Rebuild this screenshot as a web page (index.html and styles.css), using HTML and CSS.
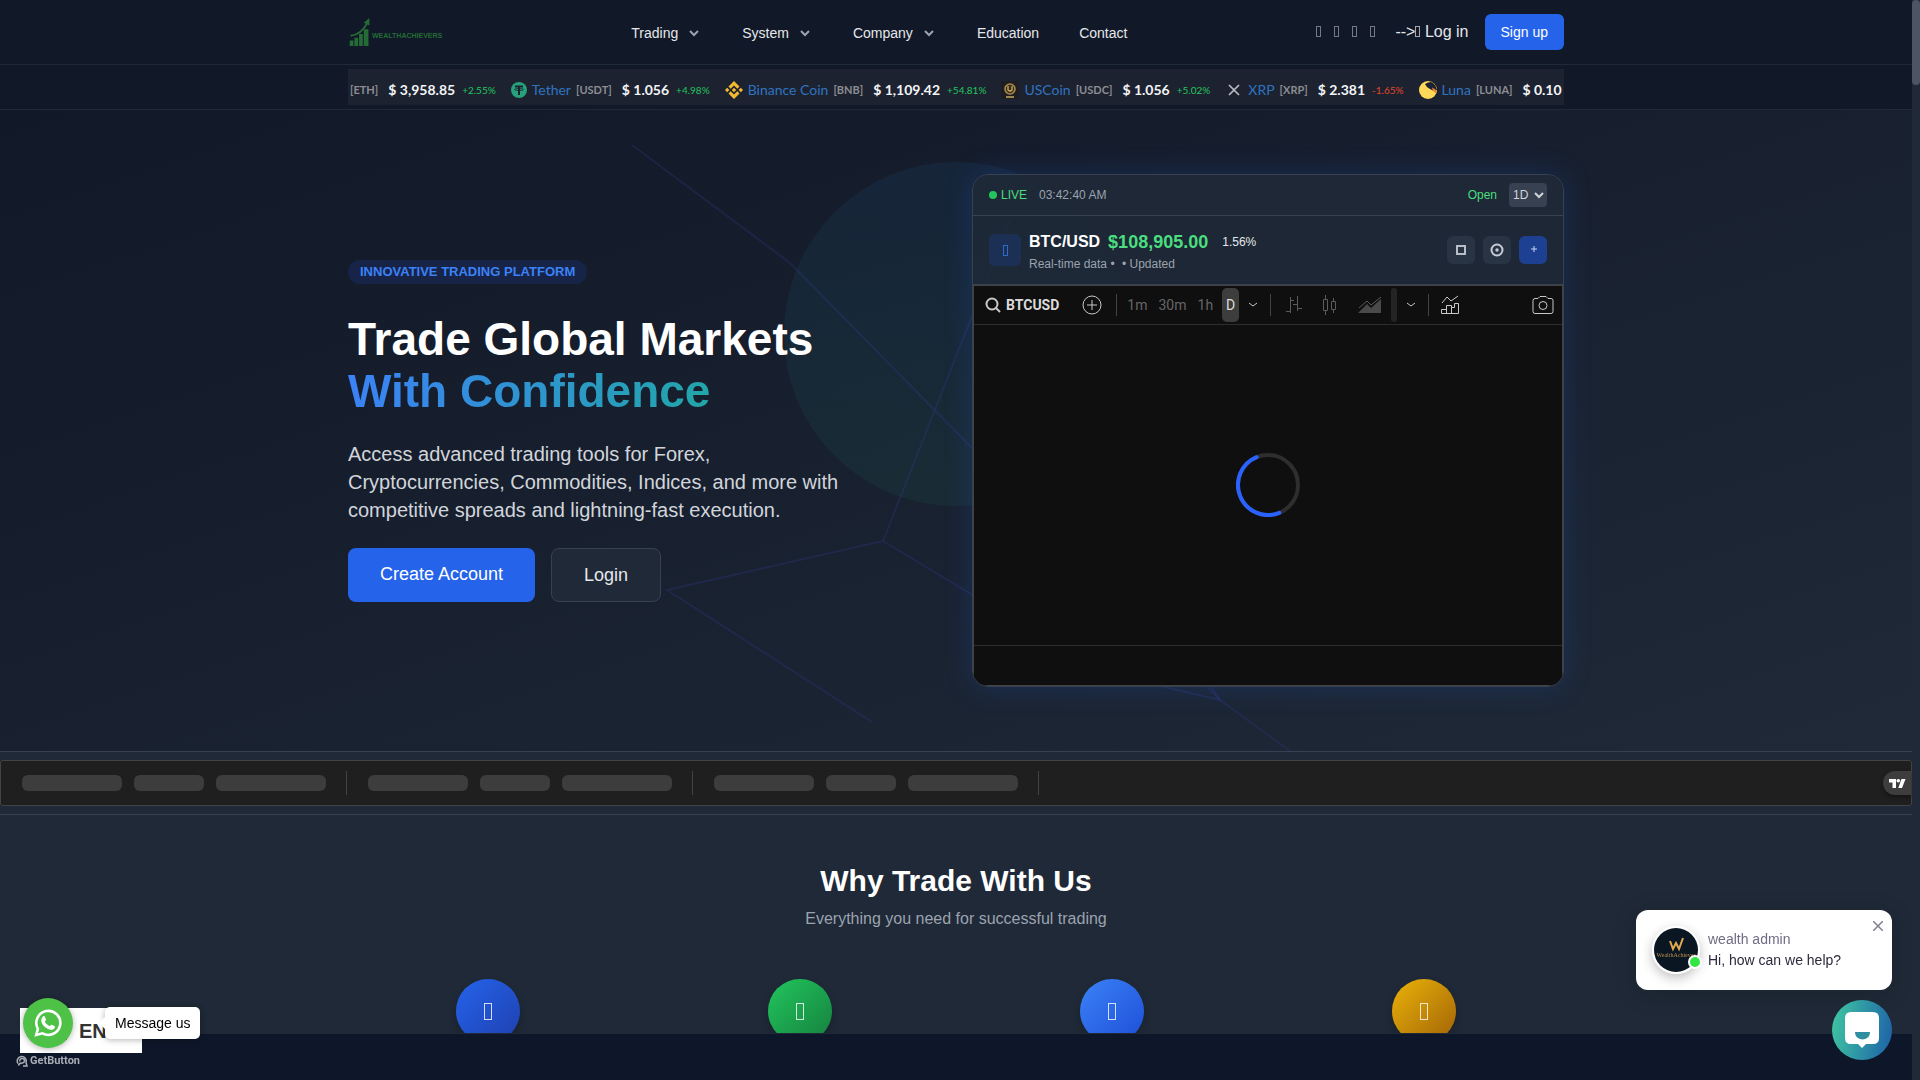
FILE: index.html
```html
<!DOCTYPE html>
<html lang="en">
<head>
  <meta charset="UTF-8">
  <meta name="viewport" content="width=device-width, initial-scale=1.0">
  <title>WealthAchievers</title>
  <link rel="stylesheet" href="styles.css">
</head>
<body>
  <header class="site-header">
    <div class="container header-row">
      <a class="logo" href="#">
        <svg width="22" height="30" viewBox="0 0 22 32" aria-hidden="true">
          <path d="M0 25h4v6H0zM5 22h4v9H5zM10 18h4v13h-4zM15 13h5v18h-5z" fill="currentColor"/>
          <path d="M1 20C9 19 15 14 19 6" fill="none" stroke="currentColor" stroke-width="2"/>
          <path d="M21 1l-6 5 6 3z" fill="currentColor"/>
        </svg>
        <span>WEALTHACHIEVERS</span>
      </a>
      <nav class="main-nav">
        <button type="button">Trading <svg class="chev" viewBox="0 0 16 16"><path d="M4 6l4 4 4-4"/></svg></button>
        <button type="button">System <svg class="chev" viewBox="0 0 16 16"><path d="M4 6l4 4 4-4"/></svg></button>
        <button type="button">Company <svg class="chev" viewBox="0 0 16 16"><path d="M4 6l4 4 4-4"/></svg></button>
        <a href="#">Education</a>
        <a href="#">Contact</a>
      </nav>
      <div class="header-actions">
        <div class="social">
          <a href="#" aria-label="Facebook"><i class="glyph"></i></a>
          <a href="#" aria-label="Twitter"><i class="glyph"></i></a>
          <a href="#" aria-label="Instagram"><i class="glyph"></i></a>
          <a href="#" aria-label="Telegram"><i class="glyph"></i></a>
        </div>
        <div class="login-wrap">--&gt;<a href="#"><i class="glyph"></i> Log in</a></div>
        <a class="signup" href="#">Sign up</a>
      </div>
    </div>
  </header>

  <div class="ticker">
    <div class="container">
      <div class="ticker-track">
        <div class="coin"><small>[ETH]</small><b>$ 3,958.85</b><em>+2.55%</em></div>
        <div class="coin">
          <svg width="16" height="16" viewBox="0 0 16 16"><circle cx="8" cy="8" r="8" fill="#26a17b"/><path d="M4 4.500h8M8 4v9" stroke="#1d2230" stroke-width="2"/><ellipse cx="8" cy="7.500" rx="4.500" ry="1" fill="none" stroke="#1d2230" stroke-width=".8"/></svg>
          <a href="#">Tether</a><small>[USDT]</small><b>$ 1.056</b><em>+4.98%</em>
        </div>
        <div class="coin">
          <svg width="18" height="18" viewBox="0 0 18 18" fill="#f3ba2f"><path d="M9 0l5.500 5.500-2.200 2.200L9 4.400 5.700 7.700 3.500 5.500zM9 18l5.500-5.500-2.200-2.200L9 13.600l-3.300-3.300-2.200 2.200zM2.200 6.800L4.400 9l-2.200 2.200L0 9zM15.800 6.800L18 9l-2.200 2.200L13.600 9zM9 6.800L11.200 9 9 11.200 6.800 9z"/></svg>
          <a href="#">Binance Coin</a><small>[BNB]</small><b>$ 1,109.42</b><em>+54.81%</em>
        </div>
        <div class="coin">
          <svg width="18" height="18" viewBox="0 0 18 18"><rect width="18" height="18" fill="#1d1d22"/><circle cx="9" cy="8" r="5" fill="#3a2e1c" stroke="#a98a4e" stroke-width="1.6"/><path d="M7 5v4q2 2 4 0V5M5 16h8" fill="none" stroke="#c9a964" stroke-width="1.3"/></svg>
          <a href="#">USCoin</a><small>[USDC]</small><b>$ 1.056</b><em>+5.02%</em>
        </div>
        <div class="coin">
          <svg width="18" height="18" viewBox="0 0 18 18"><path d="M4 4l4 4q1 1 2 0l4-4M4 14l4-4q1-1 2 0l4 4" fill="none" stroke="#b9bcc2" stroke-width="1.7"/></svg>
          <a href="#">XRP</a><small>[XRP]</small><b>$ 2.381</b><em class="down">-1.65%</em>
        </div>
        <div class="coin">
          <svg width="18" height="18" viewBox="0 0 18 18"><circle cx="9" cy="9" r="9" fill="#ffd85a"/><path d="M6 3Q9 1 12 1q5 2 6 8-3 2-7-1Q7 6 6 3z" fill="#1d2230"/><path d="M13 6.500q3 1 5 3.500l-1 2q-3-1-4-5.500z" fill="#f0862c"/></svg>
          <a href="#">Luna</a><small>[LUNA]</small><b>$ 0.10</b>
        </div>
      </div>
    </div>
  </div>

  <main>
    <section class="hero">
      <svg class="hero-art" viewBox="0 110 1912 641" preserveAspectRatio="xMidYMid slice" aria-hidden="true">
        <defs>
          <linearGradient id="orb" x1="0" y1="0" x2="0" y2="1">
            <stop offset="0" stop-color="#1f6bb0" stop-opacity=".10"/>
            <stop offset="1" stop-color="#1a8a65" stop-opacity=".10"/>
          </linearGradient>
        </defs>
        <circle cx="956" cy="334" r="172" fill="url(#orb)"/>
        <g fill="none" stroke="#3540a0" stroke-opacity=".24" stroke-width="2">
          <path d="M632 145L790 263L1220 700L1290 751"/>
          <path d="M872 722L667 590L883 541L1010 220"/>
          <path d="M883 541L1100 672L1220 700L1200 670"/>
        </g>
      </svg>
      <div class="container hero-grid">
        <div class="hero-copy">
          <span class="badge">INNOVATIVE TRADING PLATFORM</span>
          <h1>Trade Global Markets<br><span>With Confidence</span></h1>
          <p>Access advanced trading tools for Forex, Cryptocurrencies, Commodities, Indices, and more with competitive spreads and lightning-fast execution.</p>
          <div class="cta">
            <a class="btn-primary" href="#">Create Account</a>
            <a class="btn-outline" href="#">Login</a>
          </div>
        </div>

        <div class="chart-card">
          <div class="card-status">
            <span class="dot"></span>
            <span class="live">LIVE</span>
            <time>03:42:40 AM</time>
            <span class="open">Open</span>
            <select aria-label="Timeframe"><option>1D</option><option>1W</option><option>1M</option></select>
          </div>
          <div class="card-pair">
            <div class="pair-icon"><i class="glyph"></i></div>
            <div class="pair-info">
              <div class="pair-line"><strong>BTC/USD</strong><b>$108,905.00</b><span>1.56%</span></div>
              <p>Real-time data <span>•</span> <span>•</span> Updated</p>
            </div>
            <div class="pair-actions">
              <button type="button" aria-label="Fullscreen"><svg width="12" height="12" viewBox="0 0 12 12"><rect x="2" y="2" width="8" height="8" fill="none" stroke="#b8bec9" stroke-width="2"/></svg></button>
              <button type="button" aria-label="Target"><svg width="14" height="14" viewBox="0 0 14 14"><circle cx="7" cy="7" r="5.5" fill="none" stroke="#c6ccd6" stroke-width="2"/><circle cx="7" cy="7" r="1.7" fill="#c6ccd6"/></svg></button>
              <button type="button" class="add" aria-label="Add"><svg width="14" height="14" viewBox="0 0 14 14"><path d="M8 3v6M5 6h6" stroke="#c5d5f5" stroke-width="1"/></svg></button>
            </div>
          </div>
          <div class="chart">
            <div class="chart-bar">
              <button type="button" class="symbol">
                <svg width="16" height="16" viewBox="0 0 16 16"><circle cx="7" cy="7" r="5.5"/><path d="M11 11l4 4"/></svg>
                BTCUSD
              </button>
              <button type="button" class="compare" aria-label="Compare"><svg width="20" height="20" viewBox="0 0 20 20"><circle cx="10" cy="10" r="9"/><path d="M10 5v10M5 10h10"/></svg></button>
              <span class="rule"></span>
              <div class="intervals">
                <button type="button">1m</button>
                <button type="button">30m</button>
                <button type="button">1h</button>
                <button type="button" class="active">D</button>
              </div>
              <button type="button" aria-label="More intervals"><svg width="10" height="10" viewBox="0 0 10 10"><path d="M1 3l4 3 4-3"/></svg></button>
              <span class="rule"></span>
              <div class="styles">
                <button type="button" aria-label="Bars"><svg width="16" height="18" viewBox="0 0 16 18"><path d="M4.500 1v16M0 15.500h4M4 4.500h4M11.500 0v15M7 8.500h4M12 12.500h4"/></svg></button>
                <button type="button" aria-label="Candles"><svg width="16" height="20" viewBox="0 0 16 20"><path d="M1.500 4.500h4v11h-4zM3.500 0v4M3.500 16v4M9.500 6.500h4v8h-4zM11.500 3v3M11.500 15v3"/></svg></button>
                <button type="button" aria-label="Area"><svg width="24" height="20" viewBox="0 0 24 20"><path d="M1 13l8-7 4 4L23 2"/><path d="M0 18l9-9 4 4 10-9v14z" fill="#4a4a4a" stroke="none"/></svg></button>
              </div>
              <span class="slot"></span>
              <button type="button" aria-label="More styles"><svg width="10" height="10" viewBox="0 0 10 10"><path d="M1 3l4 3 4-3"/></svg></button>
              <span class="rule"></span>
              <button type="button" aria-label="Indicators"><svg width="18" height="20" viewBox="0 0 18 20"><path d="M1 8l5-6 4 4 7-5M.500 18.500v-4h5v4M5.500 18.500v-8h5v8M10.500 12.500h3v-4h4v10h-17"/></svg></button>
              <button type="button" class="camera" aria-label="Snapshot"><svg width="22" height="18" viewBox="0 0 22 18"><path d="M3 2.500h3l2-2h6l2 2h3q2 0 2 2v11q0 2-2 2H3q-2 0-2-2v-11q0-2 2-2z"/><circle cx="11" cy="9.500" r="4"/></svg></button>
            </div>
            <div class="chart-body">
              <svg width="64" height="64" viewBox="0 0 64 64" fill="none" stroke-width="4">
                <circle cx="32" cy="32" r="30" stroke="#2e2e2e"/>
                <path d="M20.700 4.200A30 30 0 0 0 43.300 59.800" stroke="#2962ff" stroke-linecap="round"/>
              </svg>
            </div>
            <div class="chart-foot"></div>
          </div>
        </div>
      </div>
    </section>

    <section class="quotes">
      <div class="quotes-box">
        <div class="quote"><i></i><i></i><i></i></div>
        <div class="quote"><i></i><i></i><i></i></div>
        <div class="quote"><i></i><i></i><i></i></div>
        <a class="tv" href="#" aria-label="TradingView"><svg width="17" height="9" viewBox="0 0 17 9" fill="#fff"><path d="M0 0h7v9H3.500V3.500H0z"/><circle cx="9.300" cy="1.800" r="1.800"/><path d="M12.500 0h4L13 9H9.300z"/></svg></a>
      </div>
    </section>

    <section class="why">
      <div class="container">
        <h2>Why Trade With Us</h2>
        <p>Everything you need for successful trading</p>
        <div class="features">
          <div class="feature blue"><i class="glyph"></i></div>
          <div class="feature green"><i class="glyph"></i></div>
          <div class="feature sky"><i class="glyph"></i></div>
          <div class="feature amber"><i class="glyph"></i></div>
        </div>
      </div>
    </section>
  </main>

  <div class="bottom-bar"></div>

  <button type="button" class="lang"><span class="flag"></span>EN</button>
  <div class="contact-widget">
    <a class="whatsapp" href="#" aria-label="WhatsApp">
      <svg width="28" height="28" viewBox="0 0 28 28"><path d="M2.200 26l1.700-6.200A12 12 0 1 1 8.400 24.300z" fill="none" stroke="#fff" stroke-width="2.600"/><path d="M9 7.500c.6-.6 1.500-.5 1.900.3l1.100 2.500c.2.500 0 .9-1.200 2.300 1.200 2.200 2.700 3.600 5 4.600 1.200-1.500 1.500-1.700 2-1.500l2.600 1.300c.6.300.6.900.3 1.700-.6 1.600-2.600 2.300-4.200 2-5-1.200-8.200-4.500-9.200-8.200-.4-1.900.5-3.700 1.700-5z" fill="#fff"/></svg>
    </a>
    <a class="tip" href="#">Message us</a>
  </div>
  <a class="getbutton" href="#">
    <svg width="12" height="12" viewBox="0 0 12 12" fill="none" stroke="currentColor" stroke-width="1.500"><path d="M2 8.500A4.500 4.500 0 1 1 10 7.500L11 11H7M4 6.500A2.300 2.300 0 1 1 6 8Q3 8 2.500 10.500"/></svg>
    GetButton
  </a>

  <div class="chat-pop">
    <div class="avatar">
      <svg width="44" height="44" viewBox="0 0 44 44"><circle cx="22" cy="22" r="22" fill="#0a1622"/><path d="M16 13l3 8 3-6 3 6 4-11" fill="none" stroke="#e0aa4e" stroke-width="2"/><text x="22" y="29" text-anchor="middle" class="avatar-text">WealthAchiever</text></svg>
      <span class="online"></span>
    </div>
    <div>
      <p class="who">wealth admin</p>
      <p class="msg">Hi, how can we help?</p>
    </div>
    <button type="button" class="close" aria-label="Close"><svg width="10" height="10" viewBox="0 0 10 10"><path d="M0 0l10 10M10 0L0 10" stroke="#7f7f90" stroke-width="1.500"/></svg></button>
  </div>
  <button type="button" class="chat-btn" aria-label="Open chat">
    <svg width="34" height="36" viewBox="0 0 34 36"><path d="M6 0h22q6 0 6 6v20q0 6-6 6h-7l-4 4-4-4H6q-6 0-6-6V6q0-6 6-6z" fill="#fff"/><path d="M10 20h15q0 7-7.500 7.500Q10 27 10 20z" fill="#2d8f9f"/></svg>
  </button>
  <div class="scrollbar"><div class="thumb"></div></div>
</body>
</html>
```
FILE: styles.css
```css
* {
  box-sizing: border-box;
}
body {
  margin: 0;
  padding-right: 8px;
  height: 100vh;
  overflow: hidden;
  background: #1f2937;
  color: #e5e7eb;
  font-family: "Liberation Sans", Arial, sans-serif;
  font-size: 16px;
  line-height: 24px;
}
h1, h2, p {
  margin: 0;
}
a {
  color: inherit;
  text-decoration: none;
}
button {
  padding: 0;
  border: 0;
  background: none;
  color: inherit;
  font: inherit;
  cursor: pointer;
}
svg {
  display: block;
  flex-shrink: 0;
}
.container {
  max-width: 1280px;
  margin: 0 auto;
  padding: 0 32px;
}
/* empty icon box */
.glyph {
  display: inline-block;
  width: 5px;
  height: 11px;
  border: 1px solid currentColor;
  opacity: 0.7;
}

/* header */
.site-header {
  background: #111827;
  border-bottom: 1px solid #1f2937;
}
.header-row {
  display: flex;
  align-items: center;
  justify-content: space-between;
  min-height: 64px;
}
.logo {
  display: flex;
  align-items: center;
  gap: 1px;
  padding-left: 1px;
  color: #256b35;
  font-size: 7px;
  font-weight: bold;
}
.logo span {
  padding-top: 8px;
}
.main-nav {
  display: flex;
  align-items: center;
  gap: 40px;
  padding-top: 2px;
  font-size: 14px;
  line-height: 20px;
  color: #e5e7eb;
}
.main-nav button {
  display: flex;
  align-items: center;
  gap: 8px;
}
.chev {
  width: 16px;
  height: 16px;
  fill: none;
  stroke: #9ca3af;
  stroke-width: 2;
}
.header-actions {
  display: flex;
  align-items: center;
  gap: 16px;
}
.social {
  display: flex;
  gap: 13px;
  padding-right: 4px;
  color: #9ca3af;
}
.login-wrap {
  white-space: nowrap;
}
.signup {
  padding: 8px 16px;
  border-radius: 6px;
  background: #2563eb;
  color: #fff;
  font-size: 14px;
  line-height: 20px;
}

/* price ticker */
.ticker {
  padding: 4px 0;
  background: #111827;
  border-bottom: 1px solid #1f2937;
}
.ticker-track {
  display: flex;
  gap: 15px;
  height: 36px;
  padding: 6px 0 0 2px;
  overflow: hidden;
  background: #1d2230;
  font-family: Lato, sans-serif;
  font-size: 14px;
}
.coin {
  display: flex;
  align-items: center;
  flex-shrink: 0;
  white-space: nowrap;
}
.coin a {
  margin-left: 5px;
  color: #2f74c0;
}
.coin small {
  color: #8b8d92;
  font-size: 11px;
  font-weight: bold;
}
.coin a + small {
  margin-left: 5px;
}
.coin b {
  margin-left: 10px;
  color: #f3f4f6;
}
.coin em {
  margin-left: 7px;
  color: #22c55e;
  font-size: 10px;
  font-style: normal;
}
.coin .down {
  color: #e2482d;
}

/* hero */
.hero {
  position: relative;
  padding: 64px 0;
  background: linear-gradient(to bottom right, #111827, #1f2937);
}
.hero-art {
  position: absolute;
  inset: 0;
  width: 100%;
  height: 100%;
}
.hero-grid {
  position: relative;
  display: grid;
  grid-template-columns: 1fr 1fr;
  gap: 32px;
  align-items: center;
}
.badge {
  display: inline-block;
  padding: 0 12px;
  border-radius: 12px;
  background: #172448;
  color: #3b82f6;
  font-size: 13px;
  font-weight: bold;
}
.hero h1 {
  margin: 29px 0 23px;
  color: #fff;
  font-size: 46px;
  line-height: 52px;
}
.hero h1 span {
  background: linear-gradient(to right, #3b82f6, #22a6a8);
  -webkit-background-clip: text;
  background-clip: text;
  color: transparent;
}
.hero-copy p {
  max-width: 512px;
  color: #d1d5db;
  font-size: 20px;
  line-height: 28px;
}
.cta {
  display: flex;
  gap: 16px;
  margin-top: 24px;
  font-size: 18px;
  line-height: 28px;
}
.cta a {
  padding: 12px 32px;
  border-radius: 8px;
}
.btn-primary {
  background: #2563eb;
  color: #fff;
}
.btn-outline {
  border: 1px solid #374151;
  background: #1f2937;
}

/* chart card */
.chart-card {
  overflow: hidden;
  border: 1px solid #374151;
  border-radius: 16px;
  background: rgba(31, 41, 55, 0.8);
  box-shadow: 0 0 30px rgba(37, 99, 235, 0.2);
}
.card-status {
  display: flex;
  align-items: center;
  min-height: 41px;
  padding: 0 16px;
  border-bottom: 1px solid #374151;
  background: rgba(31, 41, 55, 0.8);
  font-size: 12px;
  line-height: 16px;
}
.dot {
  width: 8px;
  height: 8px;
  margin-right: 4px;
  border-radius: 50%;
  background: #22c55e;
}
.live, .open {
  color: #4ade80;
}
.card-status time {
  margin: 0 auto 0 12px;
  color: #9ca3af;
}
.card-status select {
  height: 24px;
  margin-left: 12px;
  border: 0;
  border-radius: 4px;
  background: #374151;
  color: #d1d5db;
  font: inherit;
}
.card-pair {
  display: flex;
  align-items: center;
  gap: 8px;
  padding: 12px 16px;
  border-bottom: 1px solid #374151;
}
.pair-icon {
  display: grid;
  place-items: center;
  width: 32px;
  height: 32px;
  border-radius: 6px;
  background: #1c3056;
  color: #3b82f6;
}
.pair-line {
  display: flex;
  align-items: center;
  gap: 8px;
  line-height: 28px;
}
.pair-line strong {
  color: #fff;
}
.pair-line b {
  color: #4ade80;
  font-size: 18px;
}
.pair-line span {
  margin-left: 6px;
  font-size: 12px;
}
.pair-info p {
  color: #9ca3af;
  font-size: 12px;
  line-height: 16px;
}
.pair-info p span + span {
  margin-left: 4px;
}
.pair-actions {
  display: flex;
  gap: 8px;
  margin-left: auto;
}
.pair-actions button {
  display: grid;
  place-items: center;
  width: 28px;
  height: 28px;
  border-radius: 6px;
  background: #283343;
}
.pair-actions .add {
  background: #1e4092;
}
.chart {
  border: 1px solid #434343;
  background: #0f0f0f;
  font-family: Roboto, sans-serif;
  font-size: 14px;
  line-height: 18px;
}
.chart-bar {
  display: flex;
  align-items: center;
  height: 39px;
  padding: 0 8px 0 11px;
  border-bottom: 1px solid #2e2e2e;
  color: #666;
}
.chart-bar svg {
  fill: none;
  stroke: #c8c8c8;
}
.chart-bar .symbol {
  display: flex;
  align-items: center;
  gap: 5px;
  color: #dbdbdb;
  font-weight: bold;
}
.symbol svg {
  stroke-width: 2;
}
.compare {
  margin-left: 23px;
}
.rule {
  width: 1px;
  height: 22px;
  margin: 0 12px;
  background: #434343;
}
.compare + .rule {
  margin: 0 10px 0 14px;
}
.intervals {
  display: flex;
  align-items: center;
  gap: 11px;
  margin-right: 9px;
}
.intervals .active {
  width: 17px;
  height: 34px;
  margin-left: -2px;
  border-radius: 5px;
  background: #3d3d3d;
  color: #dbdbdb;
}
.styles {
  display: flex;
  align-items: center;
  gap: 20px;
  margin-left: 3px;
}
.chart-bar .styles svg {
  stroke: #5b5b5b;
}
.slot {
  width: 6px;
  height: 34px;
  margin: 0 9px;
  border-radius: 3px;
  background: #242424;
}
.camera {
  margin-left: auto;
}
.chart-body {
  display: grid;
  place-items: center;
  height: 321px;
  border-bottom: 1px solid #2e2e2e;
}
.chart-foot {
  height: 39px;
}

/* quote strip */
.quotes {
  padding: 8px 0;
  border-top: 1px solid #374151;
  border-bottom: 1px solid #374151;
  background: #1f2937;
}
.quotes-box {
  display: flex;
  align-items: center;
  height: 46px;
  border: 1px solid #434343;
  border-radius: 3px;
  background: #1f1f1f;
}
.quote {
  display: flex;
  align-items: center;
  gap: 12px;
  height: 24px;
  padding: 0 20px 0 21px;
  border-right: 1px solid #434343;
}
.quote i {
  width: 100px;
  height: 16px;
  border-radius: 6px;
  background: #3d3d3d;
}
.quote i:nth-child(2) {
  width: 70px;
}
.quote i:nth-child(3) {
  width: 110px;
}
.tv {
  display: grid;
  place-items: center;
  width: 28px;
  height: 24px;
  margin-left: auto;
  border-radius: 12px 0 0 12px;
  background: #3d3d3d;
  box-shadow: 0 2px 4px rgba(0, 0, 0, 0.4);
}

/* why section */
.why {
  padding: 48px 0;
  text-align: center;
}
.why h2 {
  color: #fff;
  font-size: 30px;
  line-height: 36px;
}
.why p {
  margin-top: 8px;
  color: #9ca3af;
}
.features {
  display: grid;
  grid-template-columns: repeat(4, 1fr);
  gap: 32px;
  justify-items: center;
  margin-top: 48px;
}
.feature {
  display: grid;
  place-items: center;
  width: 64px;
  height: 64px;
  border-radius: 50%;
  box-shadow: 0 4px 8px rgba(0, 0, 0, 0.2);
  color: #fff;
}
.feature .glyph {
  width: 8px;
  height: 17px;
  opacity: 0.8;
}
.blue {
  background: linear-gradient(135deg, #2563eb, #1e40af);
}
.green {
  background: linear-gradient(135deg, #22c55e, #15803d);
}
.sky {
  background: linear-gradient(135deg, #3b82f6, #1d4ed8);
}
.amber {
  background: linear-gradient(135deg, #eab308, #a16207);
}

/* things floating over the page */
.bottom-bar {
  position: fixed;
  left: 0;
  right: 8px;
  bottom: 0;
  height: 47px;
  border-top: 1px solid #1f2937;
  background: #0e1629;
}
.lang {
  position: fixed;
  left: 20px;
  bottom: 27px;
  display: flex;
  align-items: center;
  gap: 12px;
  width: 122px;
  height: 45px;
  padding-left: 20px;
  background: #fff;
  color: #333;
  font-size: 20px;
  font-weight: bold;
}
.flag {
  width: 27px;
  height: 18px;
  background: repeating-linear-gradient(#c8102e 0 2px, #fff 2px 4px);
}
.contact-widget {
  position: fixed;
  left: 23px;
  bottom: 32px;
  display: flex;
  align-items: center;
  gap: 32px;
}
.whatsapp {
  display: grid;
  place-items: center;
  width: 50px;
  height: 50px;
  border-radius: 50%;
  background: #4dc247;
  box-shadow: 0 1px 6px rgba(0, 0, 0, 0.3);
}
.tip {
  position: relative;
  padding: 4px 10px;
  border-radius: 5px;
  background: #fff;
  box-shadow: 0 1px 6px rgba(0, 0, 0, 0.3);
  color: #000;
  font-size: 14px;
}
.tip::before {
  content: "";
  position: absolute;
  left: -6px;
  top: 10px;
  border: solid transparent;
  border-width: 6px 6px 6px 0;
  border-right-color: #fff;
}
.getbutton {
  position: fixed;
  left: 16px;
  bottom: 12px;
  display: flex;
  align-items: center;
  gap: 2px;
  color: #a9adb5;
  font-family: Roboto, sans-serif;
  font-size: 11px;
  font-weight: bold;
  line-height: 14px;
}
.chat-pop {
  position: fixed;
  right: 28px;
  bottom: 90px;
  display: flex;
  gap: 8px;
  width: 256px;
  height: 80px;
  padding: 16px;
  border-radius: 12px;
  background: #fff;
  box-shadow: 0 4px 24px rgba(0, 0, 0, 0.15);
  font-size: 14px;
  line-height: 21px;
}
.chat-pop .who {
  padding-top: 3px;
  color: #6f6c85;
}
.chat-pop .msg {
  color: #2c2a3d;
}
.avatar {
  position: relative;
  width: 48px;
  height: 48px;
  border: 2px solid #fff;
  border-radius: 50%;
  box-shadow: 0 4px 12px rgba(0, 0, 0, 0.25);
}
.avatar-text {
  fill: #b98f4a;
  font-family: "Liberation Serif", serif;
  font-size: 6px;
}
.online {
  position: absolute;
  right: -4px;
  bottom: 3px;
  width: 14px;
  height: 14px;
  border: 2px solid #fff;
  border-radius: 50%;
  background: #30e642;
}
.close {
  position: absolute;
  top: 11px;
  right: 9px;
}
.chat-btn {
  position: fixed;
  right: 28px;
  bottom: 20px;
  display: grid;
  place-items: center;
  width: 60px;
  height: 60px;
  border-radius: 50%;
  background: linear-gradient(100deg, #40c9a2, #1d5fa8);
}
.scrollbar {
  position: fixed;
  top: 0;
  right: 0;
  bottom: 0;
  width: 8px;
  background: #1f2937;
}
.thumb {
  height: 85px;
  border-radius: 4px;
  background: #4b5563;
}
```
